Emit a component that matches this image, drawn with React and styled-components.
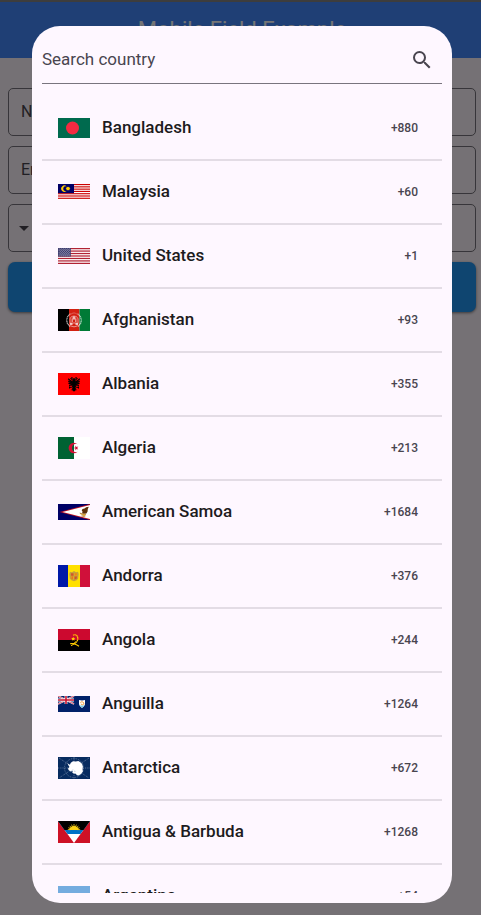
import React from 'react';
import styled, { createGlobalStyle } from 'styled-components';
import { MdSearch, MdArrowDropDown } from 'react-icons/md';

const GlobalStyle = createGlobalStyle`
  *, *::before, *::after { box-sizing: border-box; }
  body {
    margin: 0;
    background: #fef7ff;
    color: #1d1b20;
    font-family: Roboto, "Noto Sans", sans-serif;
  }
  button, input, select { font: inherit; color: inherit; }
`;

const Page = styled.main`
  min-height: 100vh;
`;

const AppBar = styled.header`
  height: 58px;
  display: flex;
  align-items: center;
  justify-content: center;
  padding-left: 3px;
  border-top: 2px solid #858585;
  background: #448aff;
`;

const Title = styled.h1`
  margin: 0;
  font-size: 22px;
  line-height: 28px;
  font-weight: 400;
  color: #fff;
`;

const Form = styled.form`
  display: flex;
  flex-direction: column;
  gap: 10px;
  padding: 30px 5px 0 8px;
`;

const Field = styled.div`
  height: 48px;
  display: flex;
  align-items: center;
  padding: 0 ${({ $tight }) => ($tight ? '3px' : '12px')};
  border: 1px solid #79747e;
  border-radius: 5px;
  color: #49454f;
`;

const Input = styled.input`
  flex: 1;
  min-width: 0;
  padding: 0 0 2px;
  border: 0;
  outline: 0;
  background: transparent;
  font-size: 16px;
  &::placeholder { color: #49454f; opacity: 1; }
`;

const CodeSelect = styled.select`
  appearance: none;
  border: 0;
  background: transparent;
  font-size: 16px;
`;

const Submit = styled.button`
  height: 50px;
  border: 0;
  border-radius: 7px;
  background: #2196f3;
  color: #fff;
  font-size: 16px;
  box-shadow: 0 1px 3px rgba(0, 0, 0, 0.5);
`;

const Scrim = styled.div`
  position: fixed;
  inset: 0;
  display: flex;
  padding: 26px 29px 12px 32px;
  background: rgba(0, 0, 0, 0.54);
`;

const Dialog = styled.section`
  flex: 1;
  min-width: 0;
  display: flex;
  flex-direction: column;
  gap: 13px;
  padding: 10px;
  border-radius: 28px;
  background: #fef7ff;
`;

const SearchBar = styled.label`
  flex: none;
  height: 48px;
  display: flex;
  align-items: center;
  padding-right: 8px;
  border-bottom: 1px solid #79747e;
  color: #49454f;
`;

const SearchInput = styled(Input)`
  font-size: 17px;
  line-height: 24px;
`;

const List = styled.ul`
  flex: 1;
  min-height: 0;
  margin: 0;
  padding: 0;
  list-style: none;
  overflow-y: auto;
  scrollbar-width: none;
`;

const Item = styled.li`
  border-bottom: 2px solid #e3dce5;
`;

const Country = styled.button`
  width: 100%;
  height: 62px;
  display: flex;
  align-items: center;
  gap: 12px;
  padding: 0 24px 0 16px;
  border: 0;
  background: transparent;
  text-align: left;
  cursor: pointer;
`;

const FlagSvg = styled.svg`
  flex: none;
  display: block;
`;

const Name = styled.span`
  flex: 1;
  padding-bottom: 2px;
  font-size: 17px;
  line-height: 24px;
  font-weight: 500;
`;

const DialCode = styled.span`
  font-size: 12px;
  line-height: 16px;
  font-weight: 500;
  color: #49454f;
`;

const range = (n) => Array.from({ length: n }, (_, i) => i);

const flags = {
  bd: [20, <>
    <path fill="#006a4e" d="M0 0h32v20H0z" />
    <circle cx="14.5" cy="10" r="6.5" fill="#f42a41" />
  </>],
  my: [16, <>
    <path fill="#fff" d="M0 0h32v16H0z" />
    {range(7).map((i) => <rect key={i} y={(i * 32) / 14} width="32" height={16 / 14} fill="#cc0001" />)}
    <path fill="#010066" d="M0 0h16v9.14H0z" />
    <path fill="#fc0" d="M8.6 2.3A3.2 3.2 0 1 0 8.6 7A2.5 2.5 0 1 1 8.6 2.3z" />
    <path fill="#fc0" d="m10 2.2.5 1.2 1.2-.6-.5 1.2 1.4.5-1.4.6.5 1.2-1.2-.6-.5 1.3-.5-1.3-1.2.6.5-1.2-1.3-.6 1.3-.5-.5-1.2 1.2.6z" />
    <circle cx="10" cy="4.600" r="1.500" fill="#fc0" />
  </>],
  us: [16, <>
    <path fill="#fff" d="M0 0h32v16H0z" />
    {range(7).map((i) => <rect key={i} y={(i * 32) / 13} width="32" height={16 / 13} fill="#b22234" />)}
    <path fill="#3c3b6e" d="M0 0h12.8v8.6H0z" />
    {range(9).map((r) => range(r % 2 ? 5 : 6).map((c) => (
      <circle key={`${r}-${c}`} cx={1.1 + c * 2.12 + (r % 2 ? 1.06 : 0)} cy={0.9 + r * 0.86} r=".38" fill="#fff" />
    )))}
  </>],
  af: [22, <>
    <path fill="#000" d="M0 0h11v22H0z" />
    <path fill="#d32011" d="M11 0h10.500v22H11z" />
    <path fill="#007a36" d="M21.500 0H32v22H21.500z" />
    <g fill="none" stroke="#fff" strokeOpacity=".65">
      <path d="M12.500 4.800c-4.800 3-5 9.500-.3 12.600M19.500 4.800c4.800 3 5 9.500.3 12.600" strokeWidth="1.300" strokeDasharray="1.300 .4" />
      <path d="M12 13.500V9.800c1-3.600 7-3.600 8 0v3.700M14 13V9.500M18 13V9.500M11.500 14h9M12.300 16.800q3.700 2.100 7.400 0" strokeWidth=".8" />
      <path d="M13 5.200q3-2.400 6 0" strokeWidth=".7" strokeDasharray=".7 .5" />
    </g>
    <path fill="#fff" fillOpacity=".7" d="M14.500 8.500q1.500-2.400 3 0V13H17v-2.500h-2V13h-.5zM12 14h2.500v2H12zM17.500 14H20v2h-2.500z" />
  </>],
  al: [22, <>
    <path fill="#f00" d="M0 0h32v22H0z" />
    <g fill="none" stroke="#000">
      <path d="M16 6v11.500" strokeWidth="3.200" />
      <path d="m15.600 6-1-1.200h-1.400l-.8.900M16.400 6l1-1.200h1.400l.8.900M13.600 5.200l.3 2.300M18.400 5.200l-.3 2.300" strokeWidth="1" />
      <path d="M15 9 12.800 8l-2.600-2.200M15 10l-2.700-.8-2-1.200M15 11.200l-2.400-.5-2.200-.6M15 12.200l-2.200-.1-1.800.2M17 9l2.200-1 2.600-2.200M17 10l2.700-.8 2-1.200M17 11.200l2.400-.5 2.200-.6M17 12.200l2.200-.1 1.800.2" strokeWidth="1.200" />
      <path d="m15.500 13-2 1.300-2.300.1M16.500 13l2 1.300 2.300.1M15 15.500l-1.500 1.300M17 15.500l1.500 1.300M11.500 13.500v2M20.500 13.500v2" strokeWidth="1" />
    </g>
    <path d="M14 16.500h4l-2 2.300z" />
  </>],
  dz: [22, <>
    <path fill="#fff" d="M0 0h32v22H0z" />
    <path fill="#006233" d="M0 0h16v22H0z" />
    <path fill="#d21034" d="M19.600 7.200a5.300 5.300 0 1 0 0 7.600 4.100 4.100 0 1 1 0-7.600z" />
    <path fill="#d21034" d="m15.700 11 1.700-.6v-1.900l1.100 1.500 1.800-.6-1.100 1.600 1.100 1.600-1.800-.6-1.100 1.500v-1.900z" />
  </>],
  as: [16, <>
    <path fill="#006" d="M0 0h32v16H0z" />
    <path fill="#bd1021" d="M1.500 8 32 0v16z" />
    <path fill="#fff" d="M4.500 8 32 1v14z" />
    <path fill="#5b3008" d="m30.800 2.800-2.600.4-1.700 1.200-2 .6-.8 1.600.9 1.200-.6 1.400 1.800.5 2.600-.1 1.200-2.100.2-2.500z" />
    <path fill="#a06525" d="m21.800 8.400 2.200 1.200 4 .2-.2.900-3.700-.1-2.300-1zM23.500 11.400l4 .2-.3 1-3.700-.2z" />
    <path fill="#d9a32a" d="m22.500 9.600 5.400.8-.2.800-5-.7zM25.500 10.800h1.100l-.4 2.200h-1z" />
  </>],
  ad: [22, <>
    <path fill="#0018a8" d="M0 0h10v22H0z" />
    <path fill="#ffe000" d="M10 0h12v22H10z" />
    <path fill="#d0103a" d="M22 0h10v22H22z" />
    <path fill="#c6a03a" d="m12 6.700 2 .5 2-1.300 2 1.300 2-.5.7 2.300-.6 4.700-1.500 1.600-2.600.9-2.600-.9-1.500-1.600-.6-4.700z" />
    <path fill="#d0552c" d="M13 8.200h2.500v2.500H13zM16.500 11.400H19l-.4 2.300-2.100.8z" />
    <path fill="#ffd900" d="M16.500 8.200H19v2.500h-2.500zM13 11.400h2.500v3l-2.100-.8z" />
    <path d="M17.200 8.200v2.500M18.300 8.200v2.500M13.800 11.400v2.500M14.700 11.400v2.800" stroke="#d0103a" strokeWidth=".5" />
  </>],
  ao: [22, <>
    <path fill="#cc092f" d="M0 0h32v11H0z" />
    <path fill="#000" d="M0 11h32v11H0z" />
    <g fill="none" stroke="#ffcb00">
      <path d="M15 6.200c3.500-1.700 5.600 1.600 4.500 5-.7 2.300-2.800 3.800-5 3.300" strokeWidth="1.200" strokeDasharray="1.500 .2" />
      <path d="M12.200 14.600h2.500l3.800 1.200 2.500 1.500" strokeWidth="1.100" />
      <path d="m13 16.800 3-1.800 1.600-2.600" strokeWidth=".9" />
    </g>
    <path fill="#ffcb00" d="m15.200 7.800.6 1.300h1.400l-1 1 .4 1.500-1.400-.7-1.300.7.300-1.500-1-1h1.500z" />
  </>],
  ai: [16, <>
    <path fill="#012169" d="M0 0h32v16H0z" />
    <path d="m0 0 16 8M16 0 0 8" stroke="#fff" strokeWidth="1.700" />
    <path d="m0 0 16 8M16 0 0 8" stroke="#c8102e" strokeWidth=".7" />
    <path d="M8 0v8M0 4h16" stroke="#fff" strokeWidth="2.800" />
    <path d="M8 0v8M0 4h16" stroke="#c8102e" strokeWidth="1.600" />
    <path fill="#fff" d="M21 4q3 .8 6 0v4.300q-.5 2.500-3 3.800-2.500-1.300-3-3.800z" />
    <path fill="#7bc8e2" d="M21.500 9.400h5q-.6 1.400-2.500 2.300-1.900-.9-2.500-2.300z" />
    <path fill="none" stroke="#f0932b" strokeWidth=".9" d="M22.300 6.500q1.700-1.700 3.200 0t-1 2.200l-1.700-.7" />
  </>],
  aq: [22, <>
    <path fill="#072b5f" d="M0 0h32v22H0z" />
    <g fill="none" stroke="#a9b9ce" strokeWidth=".5" strokeDasharray=".9 .9">
      <circle cx="16" cy="11" r="9.500" />
      <path d="M1 1 31 21M31 1 1 21M16 0v22M0 11h32" />
    </g>
    <path fill="#fff" d="m9.200 5.200 1.200 1.900 1.500.7.900-2 2.200-1.500 2.800.3 2.500-.6 2.100 1.200 1.700 1.900.8 2.500-.3 2.700.3 2.100-1.900 2.500-2.300 1.600-1.800-.3-1.100-1.500-2-.2-1.500-.8.400-1.700-2.200.5-2-1.400-.4-1.900 1.400-1.100-1.300-2.200z" />
    <path d="m13.500 14.300 1.400-1.800M17 15l-.3-1.300" stroke="#8fa3bd" strokeWidth=".6" />
  </>],
  ag: [22, <>
    <path fill="#ce1126" d="M0 0h32v22H0z" />
    <path fill="#fff" d="M0 0h32L16 22z" />
    <path fill="#0072c6" d="M0 0h32l-9.500 13h-13z" />
    <path fill="#000" d="M0 0h32l-6.500 9h-19z" />
    <path fill="#fcd116" d="M11.300 9a4.700 3.900 0 0 1 9.400 0z" />
    <path stroke="#fcd116" strokeWidth=".8" d="M16 3v3M13.600 3.600l1 2.500M18.400 3.600l-1 2.500M11.700 4.800l1.800 2M20.300 4.800l-1.800 2M10.300 6.700l2.400 1M21.700 6.700l-2.400 1M9.800 8.600h3M22.200 8.600h-3" />
  </>],
  ar: [20, <>
    <path fill="#74acdf" d="M0 0h32v20H0z" />
    <path fill="#fff" d="M0 7h32v6H0z" />
    <circle cx="16" cy="10" r="2" fill="#f6b40e" />
  </>],
};

function Flag({ code }) {
  const [height, art] = flags[code];
  return (
    <FlagSvg width="32" height={height} viewBox={`0 0 32 ${height}`} aria-hidden="true">
      {art}
    </FlagSvg>
  );
}

const countries = [
  ['bd', 'Bangladesh', '+880'],
  ['my', 'Malaysia', '+60'],
  ['us', 'United States', '+1'],
  ['af', 'Afghanistan', '+93'],
  ['al', 'Albania', '+355'],
  ['dz', 'Algeria', '+213'],
  ['as', 'American Samoa', '+1684'],
  ['ad', 'Andorra', '+376'],
  ['ao', 'Angola', '+244'],
  ['ai', 'Anguilla', '+1264'],
  ['aq', 'Antarctica', '+672'],
  ['ag', 'Antigua & Barbuda', '+1268'],
  ['ar', 'Argentina', '+54'],
];

export default function App() {
  return (
    <>
      <GlobalStyle />
      <Page>
        <AppBar>
          <Title>Mobile Field Example</Title>
        </AppBar>
        <Form>
          <Field><Input placeholder="Name" aria-label="Name" /></Field>
          <Field><Input type="email" placeholder="Email" aria-label="Email" /></Field>
          <Field $tight>
            <MdArrowDropDown size={24} aria-hidden="true" />
            <CodeSelect aria-label="Country code" defaultValue="+880">
              {countries.map(([code, , dial]) => <option key={code}>{dial}</option>)}
            </CodeSelect>
            <Input type="tel" aria-label="Mobile number" />
          </Field>
          <Submit type="button">Submit</Submit>
        </Form>
      </Page>
      <Scrim>
        <Dialog role="dialog" aria-modal="true" aria-label="Choose a country">
          <SearchBar>
            <SearchInput type="text" placeholder="Search country" aria-label="Search country" />
            <MdSearch size={24} aria-hidden="true" />
          </SearchBar>
          <List>
            {countries.map(([code, name, dial]) => (
              <Item key={code}>
                <Country type="button">
                  <Flag code={code} />
                  <Name>{name}</Name>
                  <DialCode>{dial}</DialCode>
                </Country>
              </Item>
            ))}
          </List>
        </Dialog>
      </Scrim>
    </>
  );
}
